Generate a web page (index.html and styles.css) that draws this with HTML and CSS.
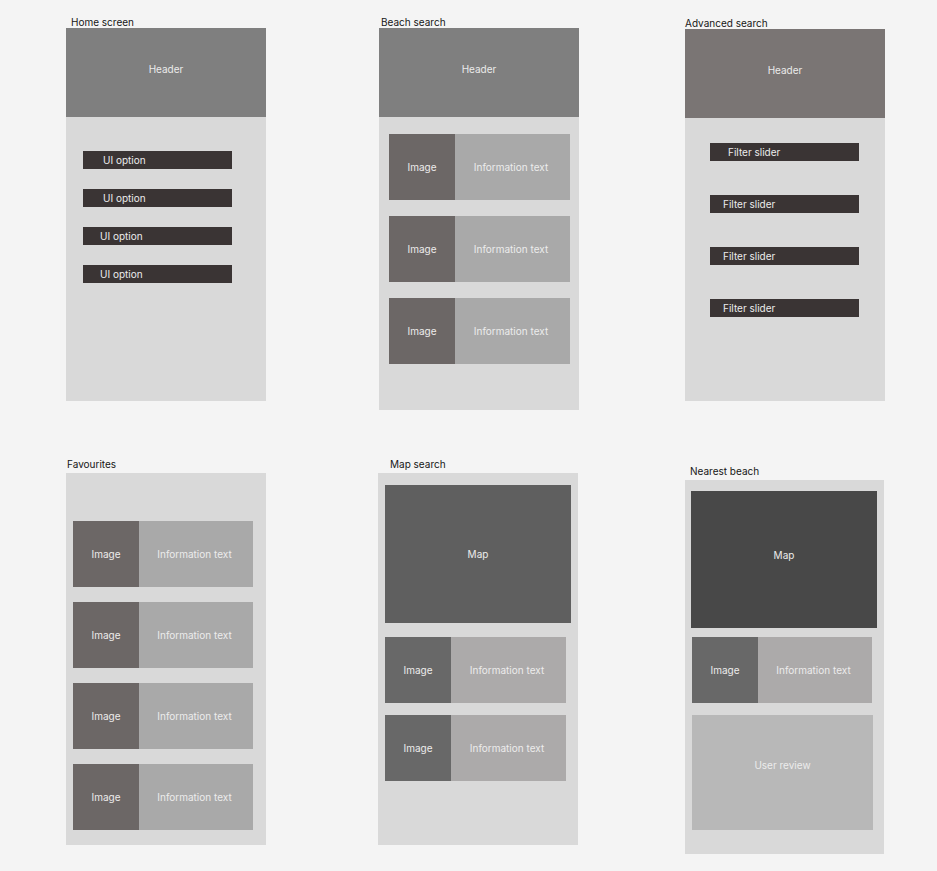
FILE: index.html
```html
<!DOCTYPE html>
<html lang="en">
<head>
<meta charset="utf-8">
<title>Beach app wireframes</title>
<link rel="stylesheet" href="styles.css">
</head>
<body>
<main class="canvas">
  <section class="screen screen-home">
    <div class="label label-home">Home screen</div>
    <div class="frame frame-home">
      <div class="header">Header</div>
      <div class="body body-home">
        <div class="bar pad-20">UI option</div>
        <div class="bar pad-20">UI option</div>
        <div class="bar pad-17">UI option</div>
        <div class="bar pad-17">UI option</div>
      </div>
    </div>
  </section>

  <section class="screen screen-beach">
    <div class="label label-beach">Beach search</div>
    <div class="frame frame-beach">
      <div class="header">Header</div>
      <div class="body body-beach">
        <div class="card"><div class="img">Image</div><div class="info">Information text</div></div>
        <div class="card"><div class="img">Image</div><div class="info">Information text</div></div>
        <div class="card"><div class="img">Image</div><div class="info">Information text</div></div>
      </div>
    </div>
  </section>

  <section class="screen screen-adv">
    <div class="label">Advanced search</div>
    <div class="frame frame-adv">
      <div class="header header-warm">Header</div>
      <div class="body body-adv">
        <div class="bar pad-18">Filter slider</div>
        <div class="bar pad-13">Filter slider</div>
        <div class="bar pad-13">Filter slider</div>
        <div class="bar pad-13">Filter slider</div>
      </div>
    </div>
  </section>

  <section class="screen screen-fav">
    <div class="label label-low label-fav">Favourites</div>
    <div class="frame frame-fav">
      <div class="body body-fav">
        <div class="card card-180"><div class="img">Image</div><div class="info">Information text</div></div>
        <div class="card card-180"><div class="img">Image</div><div class="info">Information text</div></div>
        <div class="card card-180"><div class="img">Image</div><div class="info">Information text</div></div>
        <div class="card card-180"><div class="img">Image</div><div class="info">Information text</div></div>
      </div>
    </div>
  </section>

  <section class="screen screen-map">
    <div class="label label-low label-map">Map search</div>
    <div class="frame frame-map">
      <div class="body body-map">
        <div class="map map-mid">Map</div>
        <div class="card-list">
          <div class="card card-grey"><div class="img">Image</div><div class="info">Information text</div></div>
          <div class="card card-grey"><div class="img">Image</div><div class="info">Information text</div></div>
        </div>
      </div>
    </div>
  </section>

  <section class="screen screen-near">
    <div class="label label-low label-near">Nearest beach</div>
    <div class="frame frame-near">
      <div class="body body-near">
        <div class="map map-dark">Map</div>
        <div class="card card-grey card-180 card-near"><div class="img">Image</div><div class="info">Information text</div></div>
        <div class="review">User review</div>
      </div>
    </div>
  </section>
</main>
</body>
</html>
```

FILE: styles.css
```css
* { box-sizing: border-box; }

html, body {
  margin: 0;
  padding: 0;
  background: #f4f4f4;
}

body {
  font-family: Inter, "Noto Sans", "Liberation Sans", sans-serif;
  font-size: 10px;
  color: #1a1a1a;
  width: 937px;
  height: 871px;
  overflow: hidden;
}

.canvas {
  display: grid;
  grid-template-columns: 200px 112px 200px 107px 200px;
  padding: 16px 0 0 66px;
  row-gap: 48px;
  align-items: start;
}

.screen-home { grid-column: 1; grid-row: 1; }
.screen-beach { grid-column: 3; grid-row: 1; margin-left: 1px; }
.screen-adv { grid-column: 5; grid-row: 1; margin-top: 1px; }
.screen-fav { grid-column: 1; grid-row: 2; }
.screen-map { grid-column: 3; grid-row: 2; }
.screen-near { grid-column: 5; grid-row: 2; margin-top: 7px; }

.label {
  line-height: 12px;
  height: 12px;
  white-space: nowrap;
  color: #161616;
}
.label-low { margin-bottom: 3px; }
.label-home { padding-left: 5px; }
.label-beach { padding-left: 2px; }
.label-fav { padding-left: 1px; }
.label-map { padding-left: 12px; }
.label-near { padding-left: 5px; }

.frame {
  width: 200px;
  background: #d9d9d9;
  display: flex;
  flex-direction: column;
}
.frame-home { height: 373px; }
.frame-beach { height: 382px; }
.frame-adv { height: 372px; }
.frame-fav { height: 372px; }
.frame-map { height: 372px; }
.frame-near { height: 374px; width: 199px; }

.header {
  height: 89px;
  background: #7f7f7f;
  color: #ebebeb;
  display: flex;
  align-items: center;
  justify-content: center;
  padding-bottom: 8px;
}
.header-warm { background: #7a7574; }

.body {
  display: flex;
  flex-direction: column;
  align-items: flex-start;
}
.body-home { padding: 34px 0 0 17px; gap: 20px; }
.body-beach { padding: 17px 0 0 10px; gap: 16px; }
.body-adv { padding: 25px 0 0 25px; gap: 34px; }
.body-fav { padding: 48px 0 0 7px; gap: 15px; }
.body-map { padding: 12px 0 0 7px; gap: 14px; }
.body-near { padding: 11px 0 0 6px; gap: 9px; }

.bar {
  width: 149px;
  height: 18px;
  background: #3a3434;
  color: #ececec;
  display: flex;
  align-items: center;
  line-height: 12px;
}
.pad-20 { padding-left: 20px; }
.pad-17 { padding-left: 17px; }
.pad-18 { padding-left: 18px; }
.pad-13 { padding-left: 13px; }

.card {
  width: 181px;
  height: 66px;
  display: flex;
  color: #ececec;
}
.card-180 { width: 180px; }
.card-near { margin-left: 1px; }

.img {
  width: 66px;
  flex: none;
  background: #6c6766;
  display: flex;
  align-items: center;
  justify-content: center;
}
.info {
  flex: 1;
  background: #a9a9a9;
  display: flex;
  align-items: center;
  justify-content: center;
  padding-right: 3px;
}
.card-grey .img { background: #686868; }
.card-grey .info { background: #acaaaa; }

.card-list {
  display: flex;
  flex-direction: column;
  gap: 12px;
}

.map {
  width: 186px;
  color: #ececec;
  display: flex;
  align-items: center;
  justify-content: center;
}
.map-mid { height: 138px; background: #5f5f5f; }
.map-dark { height: 137px; background: #484848; padding-bottom: 10px; }

.review {
  width: 181px;
  height: 115px;
  margin-left: 1px;
  margin-top: 3px;
  background: #b8b8b8;
  color: #ececec;
  display: flex;
  align-items: center;
  justify-content: center;
  padding-bottom: 16px;
}
```
